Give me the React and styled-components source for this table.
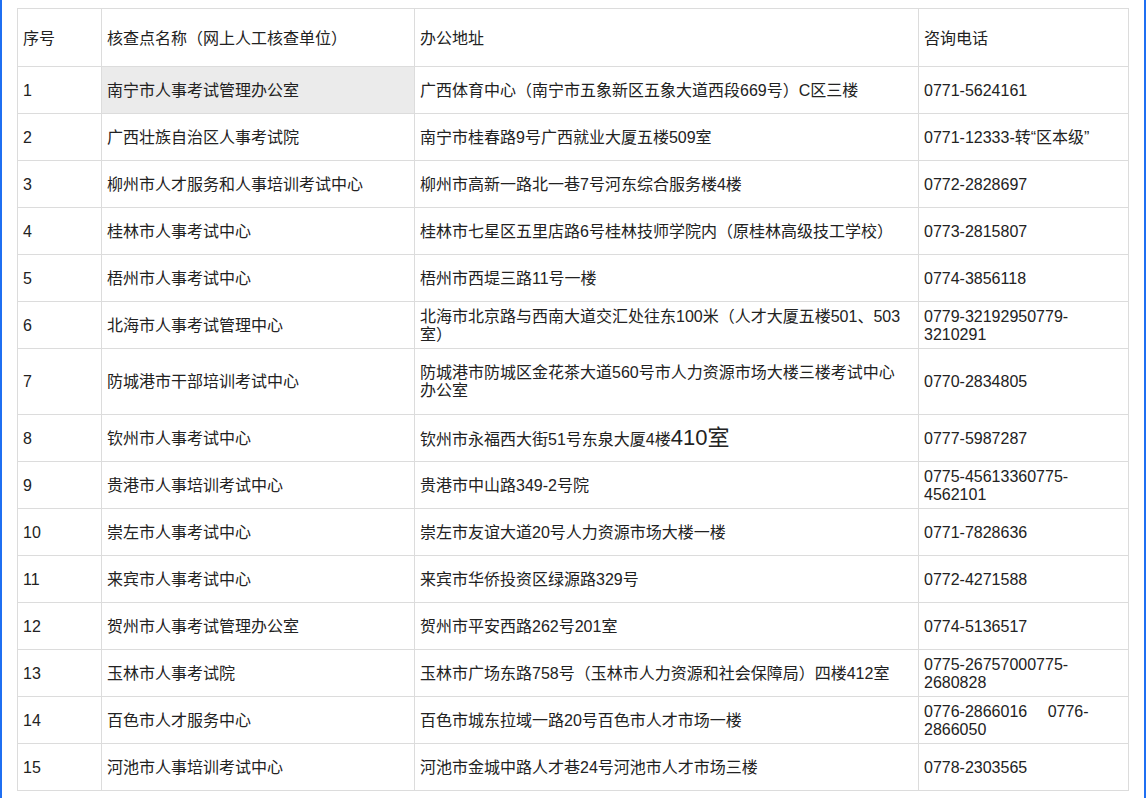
import React from 'react';
import styled, { createGlobalStyle } from 'styled-components';

const GlobalStyle = createGlobalStyle`
  body {
    margin: 0;
    background: #fff;
    font-family: "Liberation Sans", "Noto Sans CJK SC", sans-serif;
  }
`;

const Frame = styled.div`
  box-sizing: border-box;
  width: 1146px;
  min-height: 798px;
  border-left: 2px solid #1f6ff2;
  border-right: 2px solid #1f6ff2;
  padding: 8px 0 0 15px;
`;

const Table = styled.table`
  width: 1111px;
  border-collapse: collapse;
  table-layout: fixed;
  font-size: 16px;
  line-height: 18px;
  color: #222;
`;

const Row = styled.tr`
  height: ${props => props.height || 47}px;
`;

const Cell = styled.td`
  border: 1px solid #dcdcdc;
  padding: 1px ${props => props.padRight || 5}px 0 5px;
  vertical-align: middle;
  background: ${props => (props.highlight ? '#ebebeb' : 'transparent')};
  word-break: break-word;
`;

const HeadCell = styled(Cell).attrs({ as: 'th' })`
  font-weight: normal;
  text-align: left;
  padding-top: 3px;
`;

const Big = styled.span`
  font-size: 22px;
`;

const rows = [
  ['南宁市人事考试管理办公室', '广西体育中心（南宁市五象新区五象大道西段669号）C区三楼', '0771-5624161'],
  ['广西壮族自治区人事考试院', '南宁市桂春路9号广西就业大厦五楼509室', '0771-12333-转“区本级”'],
  ['柳州市人才服务和人事培训考试中心', '柳州市高新一路北一巷7号河东综合服务楼4楼', '0772-2828697'],
  ['桂林市人事考试中心', '桂林市七星区五里店路6号桂林技师学院内（原桂林高级技工学校）', '0773-2815807'],
  ['梧州市人事考试中心', '梧州市西堤三路11号一楼', '0774-3856118'],
  ['北海市人事考试管理中心', '北海市北京路与西南大道交汇处往东100米（人才大厦五楼501、503室）', '0779-32192950779-3210291'],
  ['防城港市干部培训考试中心', '防城港市防城区金花茶大道560号市人力资源市场大楼三楼考试中心办公室', '0770-2834805'],
  ['钦州市人事考试中心', <>钦州市永福西大街51号东泉大厦4楼<Big>410室</Big></>, '0777-5987287'],
  ['贵港市人事培训考试中心', '贵港市中山路349-2号院', '0775-45613360775-4562101'],
  ['崇左市人事考试中心', '崇左市友谊大道20号人力资源市场大楼一楼', '0771-7828636'],
  ['来宾市人事考试中心', '来宾市华侨投资区绿源路329号', '0772-4271588'],
  ['贺州市人事考试管理办公室', '贺州市平安西路262号201室', '0774-5136517'],
  ['玉林市人事考试院', '玉林市广场东路758号（玉林市人力资源和社会保障局）四楼412室', '0775-26757000775-2680828'],
  ['百色市人才服务中心', '百色市城东拉域一路20号百色市人才市场一楼', '0776-2866016\u3000 0776-2866050'],
  ['河池市人事培训考试中心', '河池市金城中路人才巷24号河池市人才市场三楼', '0778-2303565'],
];

export default function App() {
  return (
    <Frame>
      <GlobalStyle />
      <Table>
        <colgroup>
          <col style={{ width: 84 }} />
          <col style={{ width: 313 }} />
          <col style={{ width: 504 }} />
          <col style={{ width: 210 }} />
        </colgroup>
        <thead>
          <Row height={58}>
            <HeadCell>序号</HeadCell>
            <HeadCell>核查点名称（网上人工核查单位）</HeadCell>
            <HeadCell>办公地址</HeadCell>
            <HeadCell>咨询电话</HeadCell>
          </Row>
        </thead>
        <tbody>
          {rows.map((r, i) => (
            <Row key={i} height={i === 6 ? 66 : 47}>
              <Cell>{i + 1}</Cell>
              <Cell highlight={i === 0}>{r[0]}</Cell>
              <Cell padRight={10}>{r[1]}</Cell>
              <Cell>{r[2]}</Cell>
            </Row>
          ))}
        </tbody>
      </Table>
    </Frame>
  );
}
